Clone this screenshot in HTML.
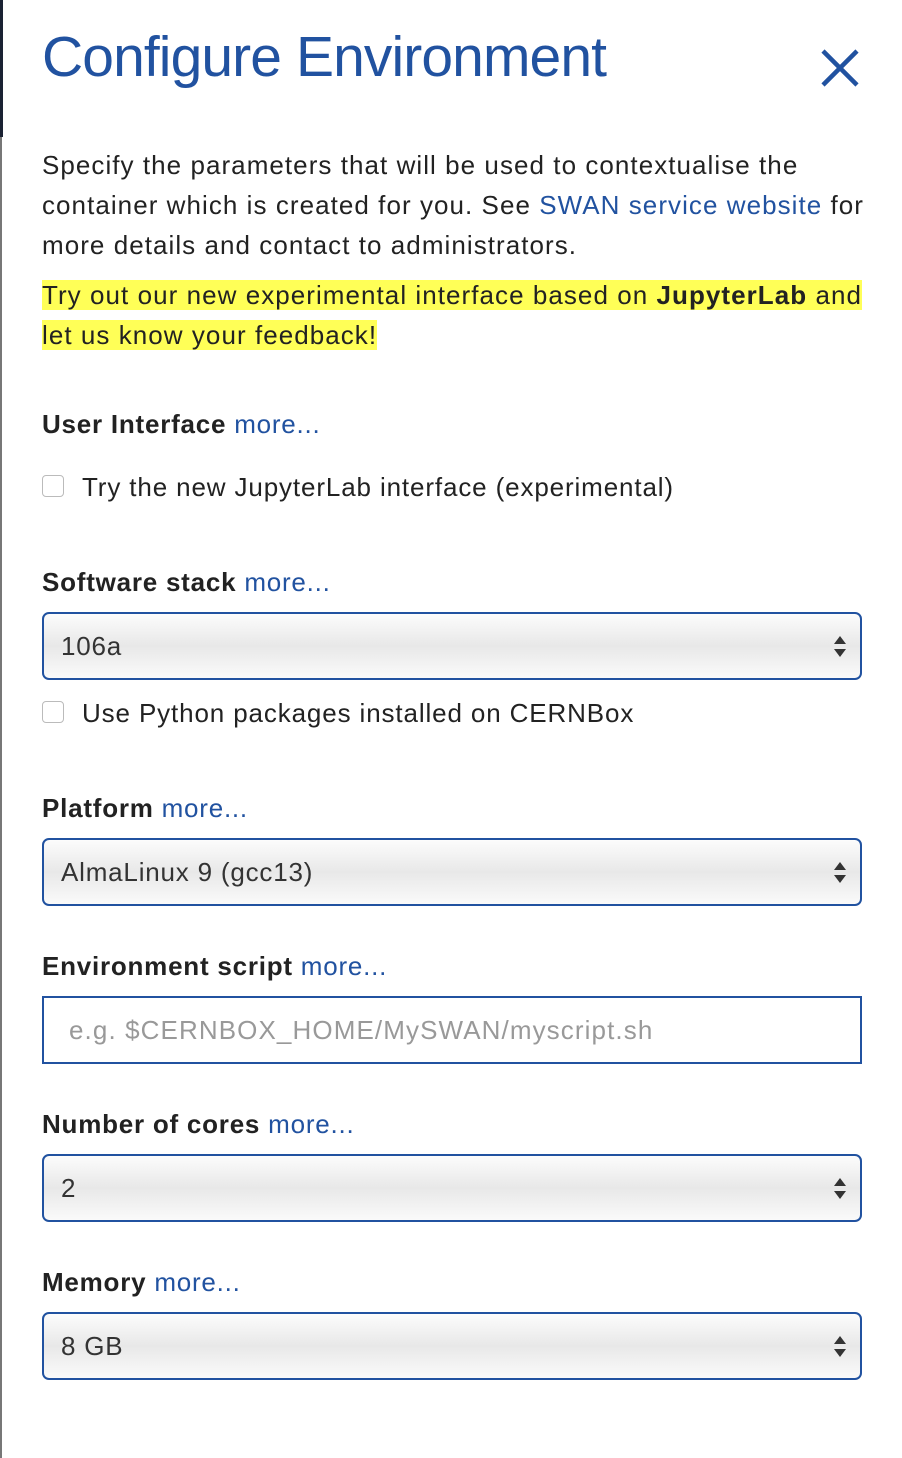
<!DOCTYPE html>
<html><head><style>
body{margin:0;width:902px;height:1458px;background:#fff;font-family:"Liberation Sans",sans-serif;color:#222;position:relative;overflow:hidden}
.lb1{position:absolute;left:0;top:0;width:3px;height:137px;background:#1a2233}
.lb2{position:absolute;left:0;top:137px;width:2px;height:1321px;background:#777}
.t{position:absolute;left:42px;top:24px;font-size:57px;color:#2152a0;letter-spacing:-0.9px}
.x{position:absolute;left:820px;top:48px}
p{position:absolute;left:42px;margin:0;font-size:26px;line-height:40px;width:830px;letter-spacing:1.05px}
a{color:#2152a0;text-decoration:none}
.hl{background:#ffff57}
.lab{position:absolute;left:42px;font-size:26px;font-weight:bold;color:#222;letter-spacing:0.77px;top:0}
.lab a{font-weight:normal}
.cb{position:absolute;left:42px;width:22px;height:22px;border:1px solid #bbb;border-radius:4px;box-sizing:border-box}
.ct{position:absolute;left:82px;font-size:26px;letter-spacing:0.87px}
.sel{position:absolute;left:42px;width:820px;height:68px;box-sizing:border-box;border:2px solid #2152a0;border-radius:7px;background:linear-gradient(#fcfcfc,#e8e8e8 50%,#fafafa);font-size:26px;line-height:64px;padding-left:17px;color:#333;letter-spacing:0.8px}
.sel:after{content:"";position:absolute;right:14px;top:22px;border-left:6px solid transparent;border-right:6px solid transparent;border-bottom:8px solid #333}
.sel:before{content:"";position:absolute;right:14px;top:35px;border-left:6px solid transparent;border-right:6px solid transparent;border-top:8px solid #333}
.inp{position:absolute;left:42px;top:996px;width:820px;height:68px;box-sizing:border-box;border:2px solid #2152a0;font-size:26px;line-height:64px;padding-left:25px;color:#999;letter-spacing:1.1px}
</style></head><body>
<div class="lb1"></div><div class="lb2"></div>
<div class="t">Configure Environment</div>
<svg class="x" width="40" height="40" viewBox="0 0 40 40"><path d="M3 3L37 37M37 3L3 37" stroke="#2152a0" stroke-width="4.5"/></svg>
<p style="top:145px">Specify the parameters that will be used to contextualise the container which is created for you. See <a>SWAN service website</a> for more details and contact to administrators.</p>
<p style="top:275px"><span class="hl">Try out our new experimental interface based on <b>JupyterLab</b> and let us know your feedback!</span></p>
<div class="lab" style="top:409px">User Interface <a>more...</a></div>
<div class="cb" style="top:475px"></div><div class="ct" style="top:472px">Try the new JupyterLab interface (experimental)</div>
<div class="lab" style="top:567px">Software stack <a>more...</a></div>
<div class="sel" style="top:612px">106a</div>
<div class="cb" style="top:701px"></div><div class="ct" style="top:698px">Use Python packages installed on CERNBox</div>
<div class="lab" style="top:793px">Platform <a>more...</a></div>
<div class="sel" style="top:838px">AlmaLinux 9 (gcc13)</div>
<div class="lab" style="top:951px">Environment script <a>more...</a></div>
<div class="inp">e.g. $CERNBOX_HOME/MySWAN/myscript.sh</div>
<div class="lab" style="top:1109px">Number of cores <a>more...</a></div>
<div class="sel" style="top:1154px">2</div>
<div class="lab" style="top:1267px">Memory <a>more...</a></div>
<div class="sel" style="top:1312px">8 GB</div>
</body></html>
